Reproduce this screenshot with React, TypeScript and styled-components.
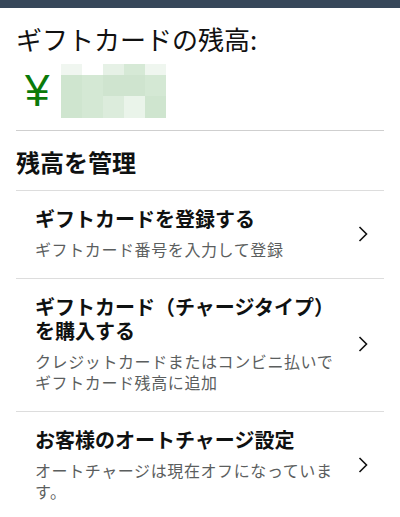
import React from 'react';
import styled, { createGlobalStyle } from 'styled-components';

const GlobalStyle = createGlobalStyle`
    html, body {
        margin: 0;
        padding: 0;
        background: #ffffff;
    }
    body {
        font-family: "Noto Sans CJK JP", "Noto Sans", sans-serif;
        color: #0f1111;
    }
`;

const TopBar = styled.div`
    height: 8px;
    background-color: #37475a;
`;

const Page = styled.div`
    padding: 0 16px;
`;

const BalanceTitle = styled.h1`
    margin: 0;
    padding-top: 14px;
    font-size: 26px;
    line-height: 34px;
    font-weight: 400;
    color: #111111;
`;

const AmountRow = styled.div`
    display: flex;
    align-items: center;
    gap: 12px;
    height: 54px;
    margin-top: 8px;
    padding-left: 9px;
`;

const Yen = styled.span`
    font-family: "Liberation Sans", Arial, sans-serif;
    font-size: 44px;
    line-height: 1;
    color: #0a7a0a;
`;

const Blur = styled.div`
    display: grid;
    grid-template-columns: repeat(5, 21px);
    grid-template-rows: 11px 21px 22px;
`;

const Cell = styled.div<{ $color: string }>`
    background-color: ${props => props.$color};
`;

const Divider = styled.hr<{ $tone?: string }>`
    margin: 12px 0 0;
    border: 0;
    border-top: 1px solid ${props => props.$tone || '#cfcfcf'};
`;

const SectionHeading = styled.h2`
    margin: 0;
    padding: 16px 0 13px;
    font-size: 24px;
    line-height: 30px;
    font-weight: 700;
    color: #0f1111;
`;

const Row = styled.a`
    display: flex;
    align-items: center;
    padding: 16px 16px 18px 19px;
    border-top: 1px solid #dddddd;
    text-decoration: none;
    color: inherit;
`;

const RowText = styled.div`
    width: 305px;
    display: flex;
    flex-direction: column;
    gap: 8px;
`;

const RowTitle = styled.div`
    font-size: 20px;
    line-height: 24px;
    font-weight: 700;
    color: #0f1111;
`;

const RowSub = styled.div`
    font-size: 16px;
    line-height: 21px;
    letter-spacing: 0.6px;
    color: #5b5e5e;
`;

const Chevron = styled.svg`
    margin-left: auto;
    flex: none;
`;

const blurColors = [
    '#f0f6f0', '#ffffff', '#e6f1e6', '#d6e9d6', '#eff6ef',
    '#cfe5cf', '#d4e8d4', '#cfe4cf', '#cfe4cf', '#d4e8d4',
    '#cfe5cf', '#d4e8d4', '#dcecdc', '#eaf4ea', '#cfe5cf',
];

const rows = [
    { title: 'ギフトカードを登録する', sub: 'ギフトカード番号を入力して登録' },
    { title: 'ギフトカード（チャージタイプ）を購入する', sub: 'クレジットカードまたはコンビニ払いでギフトカード残高に追加' },
    { title: 'お客様のオートチャージ設定', sub: 'オートチャージは現在オフになっています。' },
];

export default function App() {
    return (
        <>
            <GlobalStyle />
            <TopBar />
            <Page>
                <BalanceTitle>ギフトカードの残高:</BalanceTitle>
                <AmountRow>
                    <Yen>¥</Yen>
                    <Blur>
                        {blurColors.map((c, i) => <Cell key={i} $color={c} />)}
                    </Blur>
                </AmountRow>
                <Divider />
                <SectionHeading>残高を管理</SectionHeading>
                {rows.map(r => (
                    <Row key={r.title} href="#">
                        <RowText>
                            <RowTitle>{r.title}</RowTitle>
                            <RowSub>{r.sub}</RowSub>
                        </RowText>
                        <Chevron width="10" height="16" viewBox="0 0 10 16">
                            <polyline points="1.5,1 8.5,8 1.5,15" fill="none" stroke="#111" strokeWidth="1.6" />
                        </Chevron>
                    </Row>
                ))}
            </Page>
        </>
    );
}
